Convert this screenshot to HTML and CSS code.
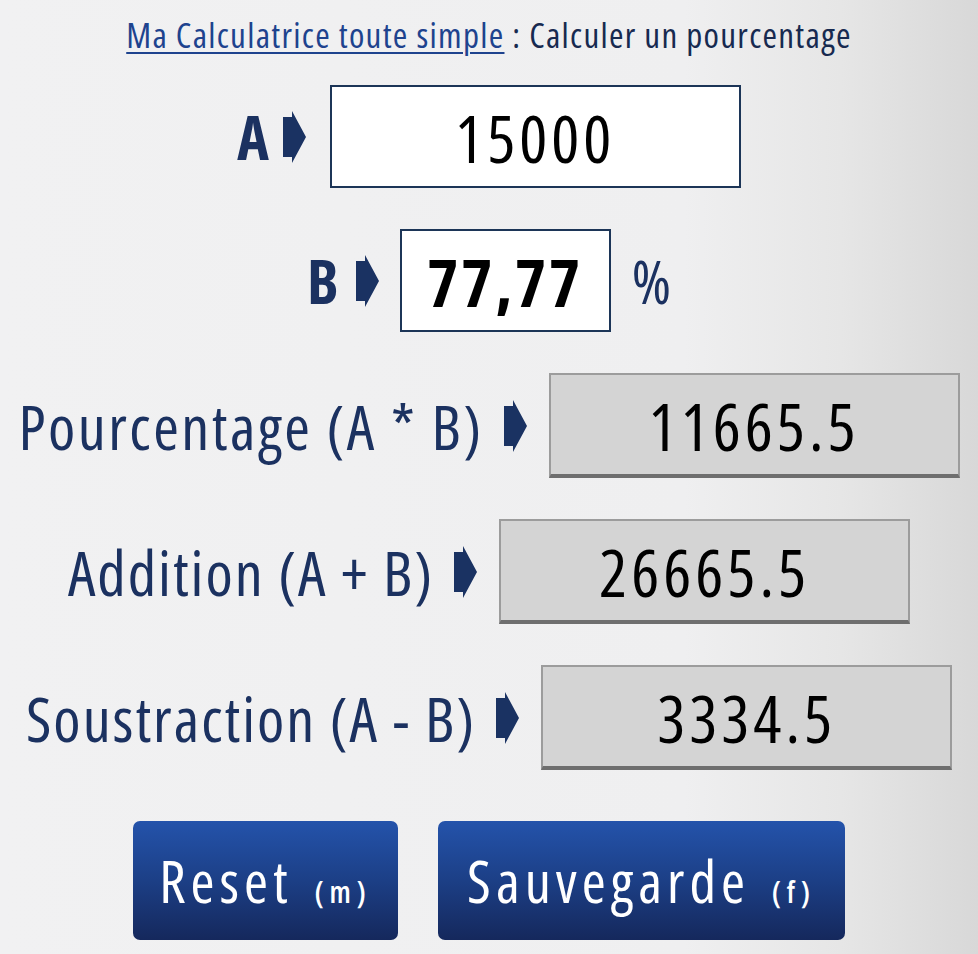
FILE: index.html
```html
<!DOCTYPE html>
<html lang="fr">
<head>
<meta charset="utf-8">
<title>Calculer un pourcentage</title>
<link rel="stylesheet" href="styles.css">
</head>
<body>
<div class="page">
  <h1 class="title"><a href="#" class="title-link">Ma Calculatrice toute simple</a> : Calculer un pourcentage</h1>

  <div class="row row-a">
    <span class="label label-bold">A</span>
    <svg class="arrow" viewBox="0 0 23 52" aria-hidden="true"><polygon points="0,6 9,6 9,0 23,26 9,52 9,46 0,46"/></svg>
    <div class="box box-input box-a">15000</div>
  </div>

  <div class="row row-b">
    <span class="label label-bold">B</span>
    <svg class="arrow" viewBox="0 0 23 52" aria-hidden="true"><polygon points="0,6 9,6 9,0 23,26 9,52 9,46 0,46"/></svg>
    <div class="box box-input box-b">77,77</div>
    <span class="label percent">%</span>
  </div>

  <div class="row row-p">
    <span class="label label-wide">Pourcentage (A * B)</span>
    <svg class="arrow" viewBox="0 0 23 52" aria-hidden="true"><polygon points="0,6 9,6 9,0 23,26 9,52 9,46 0,46"/></svg>
    <div class="box box-result">11665.5</div>
  </div>

  <div class="row row-add">
    <span class="label">Addition (A + B)</span>
    <svg class="arrow" viewBox="0 0 23 52" aria-hidden="true"><polygon points="0,6 9,6 9,0 23,26 9,52 9,46 0,46"/></svg>
    <div class="box box-result">26665.5</div>
  </div>

  <div class="row row-sub">
    <span class="label">Soustraction (A - B)</span>
    <svg class="arrow" viewBox="0 0 23 52" aria-hidden="true"><polygon points="0,6 9,6 9,0 23,26 9,52 9,46 0,46"/></svg>
    <div class="box box-result">3334.5</div>
  </div>

  <div class="buttons">
    <button class="btn btn-reset">Reset <span class="key">(m)</span></button>
    <button class="btn btn-save">Sauvegarde <span class="key">(f)</span></button>
  </div>
</div>
</body>
</html>
```
FILE: styles.css
```css
html, body {
  margin: 0;
  padding: 0;
}
body {
  width: 978px;
  height: 954px;
  overflow: hidden;
  background: linear-gradient(to right, #f1f1f2 0%, #efeff0 70%, #e6e6e6 86%, #d8d8d8 100%);
  font-family: "Open Sans", "DejaVu Sans Condensed", sans-serif;
  font-stretch: 75%;
}
.page {
  display: flex;
  flex-direction: column;
  align-items: center;
  padding-top: 12px;
}
.title {
  margin: 0;
  height: 46px;
  font-size: 35px;
  font-weight: 500;
  line-height: 46px;
  color: #172a50;
  letter-spacing: 1.3px;
  white-space: nowrap;
}
.title-link {
  color: #1e438e;
  text-decoration: underline;
  text-decoration-thickness: 2px;
  text-underline-offset: 4px;
}
.row {
  display: flex;
  align-items: center;
  justify-content: center;
  margin-top: 41px;
}
.row-a { margin-top: 27px; }
.label {
  font-size: 62px;
  font-weight: 500;
  color: #1b3160;
  white-space: nowrap;
  line-height: 1;
  letter-spacing: 2px;
}
.label-wide { letter-spacing: 2.5px; }
.label-bold {
  font-weight: 700;
  font-size: 60px;
  letter-spacing: 0;
}
.arrow {
  width: 23px;
  height: 52px;
  fill: #1a3262;
  flex: none;
}
.row-a .arrow { margin: 0 24px 0 14px; }
.row-b .arrow { margin: 0 21px 0 17px; }
.row-p .arrow, .row-add .arrow, .row-sub .arrow { margin: 0 22px 0 20px; }
.box {
  box-sizing: border-box;
  display: flex;
  align-items: center;
  justify-content: center;
  font-size: 66px;
  font-weight: 500;
  color: #000;
  letter-spacing: 4px;
  line-height: 1;
}
.box-input {
  background: #fff;
  border: 2px solid #1c3557;
  height: 103px;
}
.box-a { width: 411px; }
.box-b { width: 211px; font-weight: 700; letter-spacing: 3px; }
.percent {
  font-size: 60px;
  margin-left: 21px;
  letter-spacing: 0;
}
.box-result {
  width: 411px;
  height: 105px;
  background: #d4d4d4;
  border: 2px solid #9c9c9c;
  border-bottom: 4px solid #6e6e6e;
}
.buttons {
  display: flex;
  gap: 40px;
  margin-top: 51px;
}
.btn {
  height: 119px;
  border: none;
  border-radius: 7px;
  background: linear-gradient(to bottom, #2453ab 0%, #1c3f86 50%, #15285c 100%);
  color: #fff;
  font-family: inherit;
  font-stretch: 75%;
  font-size: 58px;
  font-weight: 500;
  letter-spacing: 5px;
  padding: 0;
  cursor: pointer;
}
.btn-reset { width: 265px; }
.btn-save { width: 407px; }
.key {
  font-size: 30px;
  font-weight: 600;
  letter-spacing: 6px;
  margin-left: 6px;
}
```
